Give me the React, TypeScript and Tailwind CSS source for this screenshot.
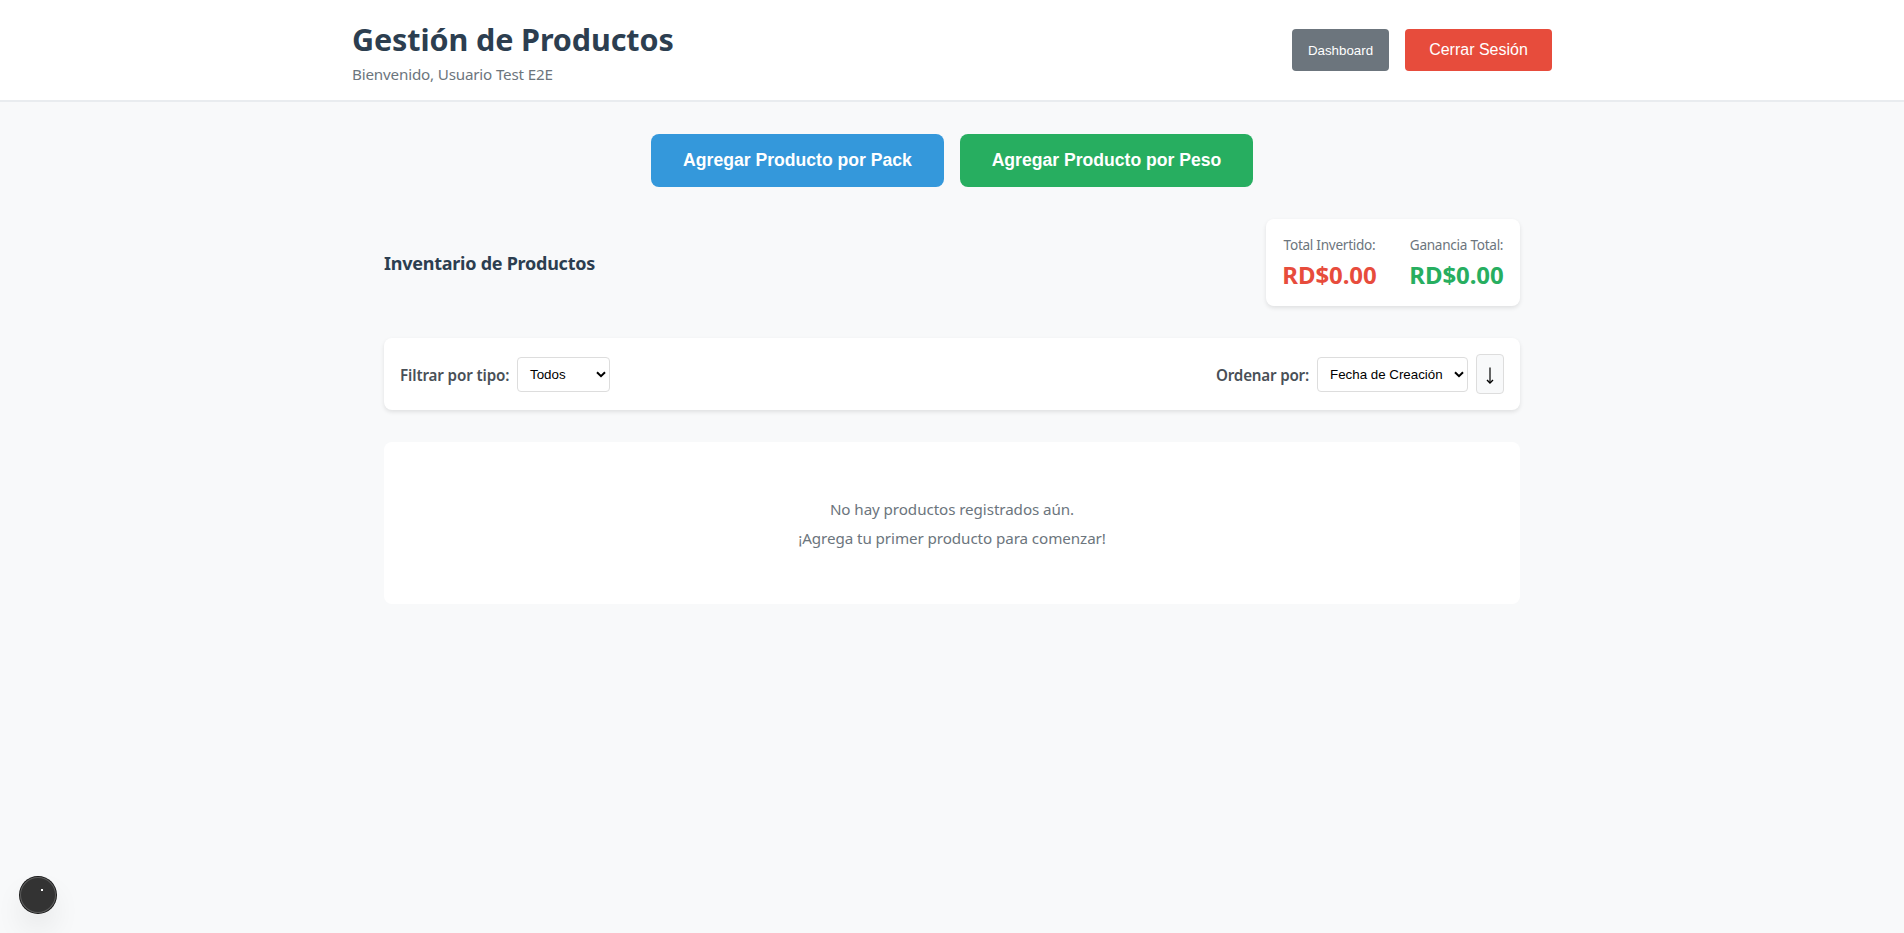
import React from "react";

const ui = "font-['Noto_Sans',sans-serif]";
const arial = "font-['Liberation_Sans',sans-serif]";

function Chevron() {
  return (
    <svg width="10" height="7" viewBox="0 0 10 7" fill="none" className="shrink-0">
      <path d="M1 1.2 5 5.2 9 1.2" stroke="#000" strokeWidth="2" />
    </svg>
  );
}

function Select({ label, className }: { label: string; className: string }) {
  return (
    <button className={`${arial} flex h-[35px] items-center justify-between rounded border border-[#ddd] bg-white pl-[12px] pr-[3px] text-[13.333px] text-black ${className}`}>
      <span className="whitespace-nowrap pt-px">{label}</span>
      <Chevron />
    </button>
  );
}

function Stat({ label, value, color }: { label: string; value: string; color: string }) {
  return (
    <div className="flex w-[95px] flex-col items-center whitespace-nowrap">
      <span className="text-[13.6px] leading-[20px] tracking-[-0.28px] text-[#6c757d]">{label}</span>
      <span className={`mt-[4px] text-[24px] font-bold leading-[32px] tracking-[-0.1px] ${color}`}>{value}</span>
    </div>
  );
}

export default function App() {
  return (
    <div className={`${ui} relative min-h-screen bg-[#f8f9fa]`}>
      <header className="h-[102px] border-b-2 border-[#e9ecef] bg-white">
        <div className="mx-auto flex h-[100px] w-[1200px] items-center justify-between">
          <div className="flex flex-col whitespace-nowrap pt-[3px]">
            <h1 className="text-[30.5px] font-bold leading-[42px] tracking-[-0.1px] text-[#2c3e50]">Gestión de Productos</h1>
            <p className="mt-[3px] text-[15.2px] leading-[22px] tracking-[-0.18px] text-[#6c757d]">Bienvenido, Usuario Test E2E</p>
          </div>
          <div className={`${arial} flex gap-4 text-white`}>
            <button className="h-[42px] w-[97px] rounded bg-[#6c757d] pt-px text-[13.333px] font-medium">Dashboard</button>
            <button className="h-[42px] w-[147px] rounded bg-[#e74c3c] text-[16px]">Cerrar Sesión</button>
          </div>
        </div>
      </header>
      <main className="mx-auto w-[1136px] pt-8">
        <div className={`${arial} flex justify-center gap-4 text-[17.6px] font-bold text-white`}>
          <button className="h-[53px] w-[293px] rounded-lg bg-[#3498db]">Agregar Producto por Pack</button>
          <button className="h-[53px] w-[293px] rounded-lg bg-[#27ae60]">Agregar Producto por Peso</button>
        </div>
        <section className="mt-8 flex h-[87px] items-center justify-between">
          <h2 className="whitespace-nowrap pt-[2px] text-[18px] font-bold tracking-[-0.25px] text-[#2c3e50]">Inventario de Productos</h2>
          <div className="flex h-[87px] w-[254px] justify-between rounded-lg bg-white px-4 pt-[16px] shadow-[0_2px_4px_rgba(0,0,0,0.1)]">
            <Stat label="Total Invertido:" value="RD$0.00" color="text-[#e74c3c]" />
            <Stat label="Ganancia Total:" value="RD$0.00" color="text-[#27ae60]" />
          </div>
        </section>
        <section className="mt-8 flex h-[72px] items-center justify-between rounded-lg bg-white px-4 text-[15.2px] font-semibold text-[#495057] shadow-[0_2px_4px_rgba(0,0,0,0.1)]">
          <div className="flex items-center gap-2">
            <span className="w-[109px] whitespace-nowrap pt-[2px] tracking-[-0.13px]">Filtrar por tipo:</span>
            <Select label="Todos" className="w-[93px] font-normal" />
          </div>
          <div className="flex items-center gap-2">
            <span className="w-[93px] whitespace-nowrap pt-[2px] tracking-[-0.2px]">Ordenar por:</span>
            <Select label="Fecha de Creación" className="w-[151px] font-normal" />
            <button className="flex h-[40px] w-[28px] items-center justify-center rounded border border-[#ddd] bg-[#f8f9fa]">
              <svg width="8" height="18" viewBox="0 0 8 18" fill="none" stroke="#000" className="mt-[3px]">
                <path d="M4 0.5v15" strokeWidth="1.2" />
                <path d="M1 13 4 16 7 13" strokeWidth="1.4" />
              </svg>
            </button>
          </div>
        </section>
        <section className="mt-8 flex h-[162px] flex-col items-center justify-center rounded-lg bg-white pt-[2px] text-[15.2px] text-[#6c757d]">
          <p className="leading-[21px] tracking-[-0.08px]">No hay productos registrados aún.</p>
          <p className="mt-2 leading-[21px] tracking-[-0.08px]">¡Agrega tu primer producto para comenzar!</p>
        </section>
      </main>
      <div className="absolute bottom-5 left-5 h-9 w-9 rounded-full bg-[#333] shadow-[0_0_0_1px_#171717,inset_0_0_0_1px_#5c5c5c,0_16px_32px_-8px_rgba(0,0,0,0.24)]">
        <span className="absolute left-[21px] top-[12px] h-[2px] w-[2px] bg-white" />
      </div>
    </div>
  );
}
